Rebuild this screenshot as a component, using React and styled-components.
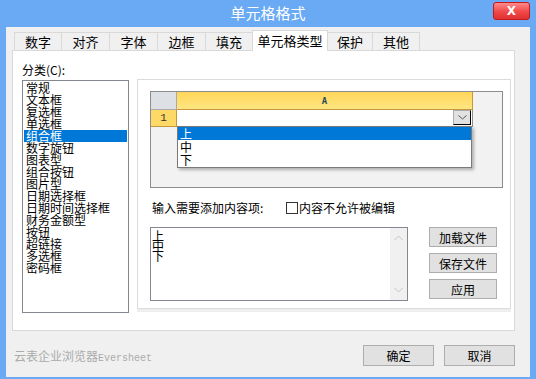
import styled, { createGlobalStyle } from 'styled-components';

const GlobalStyle = createGlobalStyle`
  body {
    margin: 0;
    background: #ffffff;
  }
  * {
    box-sizing: border-box;
  }
`;

const cjk = `"Noto Sans CJK SC", "Noto Sans", sans-serif`;

const tabs = [
  { label: '数字', width: 48 },
  { label: '对齐', width: 49 },
  { label: '字体', width: 49 },
  { label: '边框', width: 49 },
  { label: '填充', width: 48 },
  { label: '单元格类型', width: 76, active: true },
  { label: '保护', width: 46 },
  { label: '其他', width: 48 },
];

const categories = [
  '常规',
  '文本框',
  '复选框',
  '单选框',
  '组合框',
  '数字旋钮',
  '图表型',
  '组合按钮',
  '图片型',
  '日期选择框',
  '日期时间选择框',
  '财务金额型',
  '按钮',
  '超链接',
  '多选框',
  '密码框',
];

const options = ['上', '中', '下'];

export default function App() {
  return (
    <>
      <GlobalStyle />
      <Window>
        <TitleBar>
          <Title>单元格格式</Title>
          <CloseButton>X</CloseButton>
        </TitleBar>
        <Body>
          <TabRow>
            {tabs.map((t) => (
              <Tab key={t.label} $width={t.width} $active={t.active}>
                {t.label}
              </Tab>
            ))}
          </TabRow>
          <Panel>
            <LeftCol>
              <CategoryLabel>分类(C):</CategoryLabel>
              <ListBox>
                {categories.map((c) => (
                  <ListItem key={c} $selected={c === '组合框'}>
                    {c}
                  </ListItem>
                ))}
              </ListBox>
            </LeftCol>
            <Group>
              <Preview>
                <SheetGrid>
                  <Corner />
                  <ColHeader>A</ColHeader>
                  <RowHeader>1</RowHeader>
                  <Cell>
                    <DropButton>
                      <svg width="9" height="5" viewBox="0 0 9 5">
                        <polyline points="0.5,0.5 4.5,4 8.5,0.5" fill="none" stroke="#555" strokeWidth="1" />
                      </svg>
                    </DropButton>
                  </Cell>
                </SheetGrid>
                <DropList>
                  {options.map((o, i) => (
                    <DropItem key={o} $selected={i === 0}>
                      {o}
                    </DropItem>
                  ))}
                </DropList>
              </Preview>
              <FormRow>
                <Prompt>输入需要添加内容项:</Prompt>
                <CheckBox />
                <CheckText>内容不允许被编辑</CheckText>
              </FormRow>
              <ContentRow>
                <TextBox>
                  <TextLines>{'上\n中\n下'}</TextLines>
                  <ScrollBar>
                    <svg width="9" height="6" viewBox="0 0 9 6">
                      <polyline points="0.5,5 4.5,1 8.5,5" fill="none" stroke="#c4c4c4" strokeWidth="1" />
                    </svg>
                    <svg width="9" height="6" viewBox="0 0 9 6">
                      <polyline points="0.5,1 4.5,5 8.5,1" fill="none" stroke="#c4c4c4" strokeWidth="1" />
                    </svg>
                  </ScrollBar>
                </TextBox>
                <ButtonCol>
                  <SideButton>加载文件</SideButton>
                  <SideButton>保存文件</SideButton>
                  <SideButton>应用</SideButton>
                </ButtonCol>
              </ContentRow>
            </Group>
          </Panel>
          <Footer>
            <Brand>
              云表企业浏览器<BrandLatin>Eversheet</BrandLatin>
            </Brand>
            <DialogButton>确定</DialogButton>
            <DialogButton>取消</DialogButton>
          </Footer>
        </Body>
      </Window>
    </>
  );
}

const Window = styled.div`
  width: 536px;
  height: 379px;
  background: #6aa9f4;
  display: flex;
  flex-direction: column;
  font-family: ${cjk};
  font-size: 12px;
  color: #000;
`;

const TitleBar = styled.div`
  height: 27px;
  display: grid;
  grid-template-columns: 1fr auto 1fr;
  align-items: start;
`;

const Title = styled.div`
  grid-column: 2;
  color: #fff;
  font-size: 15px;
  line-height: 26px;
`;

const CloseButton = styled.div`
  grid-column: 3;
  justify-self: end;
  margin: 2px 6px 0 0;
  width: 37px;
  height: 18px;
  border: 1px solid #c41a1a;
  border-radius: 3px;
  background: linear-gradient(#ff8a8a, #f04848 55%, #e03030);
  color: #fff;
  font-family: "DejaVu Sans", sans-serif;
  font-weight: bold;
  font-size: 12px;
  line-height: 16px;
  text-align: center;
`;

const Body = styled.div`
  flex: 1;
  margin: 0 6px 2px;
  background: #f0f0f0;
  padding: 3px 0 0 6px;
  display: flex;
  flex-direction: column;
`;

const TabRow = styled.div`
  display: flex;
  align-items: flex-end;
  height: 20px;
  padding-left: 2px;
  position: relative;
  z-index: 1;
`;

const Tab = styled.div`
  width: ${(p) => p.$width}px;
  height: ${(p) => (p.$active ? 21 : 18)}px;
  margin-bottom: ${(p) => (p.$active ? -1 : 0)}px;
  margin-left: -1px;
  &:first-child {
    margin-left: 0;
  }
  background: ${(p) => (p.$active ? '#ffffff' : '#f0f0f0')};
  border: 1px solid #d9d9d9;
  border-bottom: none;
  display: flex;
  align-items: center;
  justify-content: center;
  font-size: 13px;
  padding-bottom: ${(p) => (p.$active ? 2 : 0)}px;
`;

const Panel = styled.div`
  width: 503px;
  height: 281px;
  background: #fff;
  border: 1px solid #d9d9d9;
  display: flex;
  align-items: flex-start;
  gap: 8px;
  padding: 0 3px 0 9px;
`;

const LeftCol = styled.div`
  padding-top: 11px;
  display: flex;
  flex-direction: column;
`;

const CategoryLabel = styled.div`
  line-height: 16px;
  height: 16px;
  margin-bottom: 2px;
  font-size: 12px;
`;

const ListBox = styled.div`
  width: 107px;
  height: 233px;
  border: 1px solid #828790;
  padding: 1px;
  background: #fff;
`;

const ListItem = styled.div`
  height: 12px;
  line-height: 12px;
  padding-left: 2px;
  white-space: nowrap;
  background: ${(p) => (p.$selected ? '#0078d7' : 'transparent')};
  color: ${(p) => (p.$selected ? '#fff' : '#000')};
`;

const Group = styled.div`
  margin-top: 28px;
  width: 374px;
  height: 230px;
  border: 1px solid #dcdcdc;
  box-shadow: 0 3px 0 #eeeeee;
  padding: 11px 7px 0 12px;
  display: flex;
  flex-direction: column;
`;

const Preview = styled.div`
  position: relative;
  width: 353px;
  height: 97px;
  border: 1px solid #8c8c8c;
  background: #f2f2f2;
`;

const SheetGrid = styled.div`
  display: grid;
  grid-template-columns: 26px 296px;
  grid-template-rows: 18px 17px;
`;

const Corner = styled.div`
  background: #dde0e5;
  border-right: 1px solid #a9a9a9;
  border-bottom: 1px solid #a9a9a9;
`;

const ColHeader = styled.div`
  background: linear-gradient(#ffd65a, #ffe681);
  border: 1px solid #c6973c;
  border-top: none;
  border-left: none;
  display: flex;
  align-items: center;
  justify-content: center;
  font-family: "DejaVu Sans Mono", monospace;
  font-size: 9px;
  font-weight: bold;
  color: #1f4b5a;
`;

const RowHeader = styled.div`
  background: #ffd966;
  border-right: 1px solid #c6973c;
  border-bottom: 1px solid #c6973c;
  display: flex;
  align-items: center;
  justify-content: center;
  font-family: "Liberation Mono", monospace;
  font-size: 11px;
  color: #333;
`;

const Cell = styled.div`
  background: #fff;
  border-right: 1px solid #8c8c8c;
  border-bottom: 1px solid #8c8c8c;
  display: flex;
  justify-content: flex-end;
  align-items: flex-start;
`;

const DropButton = styled.div`
  width: 18px;
  height: 15px;
  margin-right: 1px;
  background: #e1e1e1;
  border: 1px solid #acacac;
  border-right: 1px solid #000;
  border-bottom: 1px solid #000;
  display: flex;
  align-items: center;
  justify-content: center;
`;

const DropList = styled.div`
  position: absolute;
  left: 26px;
  top: 34px;
  width: 295px;
  height: 42px;
  background: #fff;
  border: 1px solid #7a7a7a;
  box-shadow: 2px 2px 3px rgba(0, 0, 0, 0.28);
`;

const DropItem = styled.div`
  height: 13px;
  line-height: 13px;
  padding-left: 2px;
  background: ${(p) => (p.$selected ? '#0078d7' : 'transparent')};
  color: ${(p) => (p.$selected ? '#fff' : '#000')};
`;

const FormRow = styled.div`
  margin-top: 12px;
  display: flex;
  align-items: center;
  height: 16px;
`;

const Prompt = styled.div`
  width: 136px;
  padding-left: 2px;
  line-height: 16px;
`;

const CheckBox = styled.div`
  width: 12px;
  height: 12px;
  border: 1px solid #333;
  background: #fff;
  margin-right: 1px;
`;

const CheckText = styled.div`
  line-height: 16px;
`;

const ContentRow = styled.div`
  margin-top: 11px;
  display: flex;
  gap: 21px;
`;

const TextBox = styled.div`
  width: 258px;
  height: 74px;
  border: 1px solid #828790;
  background: #fff;
  display: flex;
`;

const TextLines = styled.div`
  flex: 1;
  padding: 3px 0 0 1px;
  line-height: 10px;
  white-space: pre;
`;

const ScrollBar = styled.div`
  width: 17px;
  background: #f0f0f0;
  display: flex;
  flex-direction: column;
  justify-content: space-between;
  align-items: center;
  padding: 7px 0 7px;
`;

const ButtonCol = styled.div`
  display: flex;
  flex-direction: column;
  gap: 6px;
`;

const SideButton = styled.div`
  width: 68px;
  height: 20px;
  background: #e1e1e1;
  border: 1px solid #adadad;
  display: flex;
  align-items: center;
  justify-content: center;
`;

const Footer = styled.div`
  flex: 1;
  display: flex;
  align-items: flex-start;
  gap: 10px;
  padding: 14px 15px 0 2px;
`;

const Brand = styled.div`
  margin-right: auto;
  line-height: 21px;
  color: #ababab;
`;

const BrandLatin = styled.span`
  font-family: "Liberation Mono", monospace;
  font-size: 10px;
`;

const DialogButton = styled.div`
  width: 71px;
  height: 21px;
  background: #e1e1e1;
  border: 1px solid #adadad;
  display: flex;
  align-items: center;
  justify-content: center;
`;
